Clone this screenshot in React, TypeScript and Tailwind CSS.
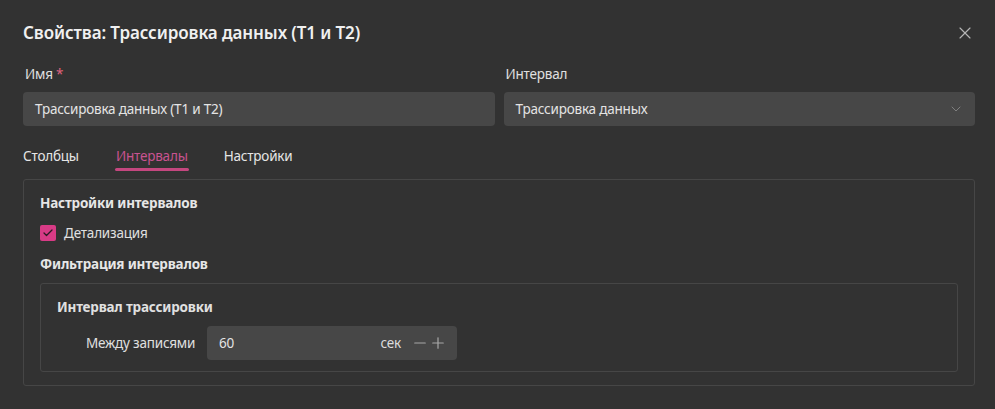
import React from 'react';
import { X, ChevronDown, Check, Minus, Plus } from 'lucide-react';

const font = { fontFamily: '"Segoe UI", "Noto Sans", "Open Sans", sans-serif' };

export default function App() {
  return (
    <div className="w-[995px] h-[409px] bg-[#323232] text-[#e8e8e8] pl-[23px] pr-[20px] pt-[20px] text-[13.5px] tracking-[-0.2px]" style={font}>
      {/* header */}
      <div className="flex items-center justify-between h-[26px]">
        <h2 className="text-[17px] font-semibold leading-[26px] tracking-[-0.1px] text-[#f0f0f0]">Свойства: Трассировка данных (T1 и T2)</h2>
        <button className="text-[#b4b4b4]">
          <X size={20} strokeWidth={1.4} />
        </button>
      </div>

      {/* name + interval */}
      <div className="grid grid-cols-2 gap-x-[9px] mt-[18px]">
        <div>
          <label className="block leading-[20px] pl-[2px] text-[#e0e0e0]">
            Имя <span className="text-[#e0627f]">*</span>
          </label>
          <div className="mt-[8px] h-[34px] rounded-[4px] bg-[#474747] flex items-center px-[12px] text-[#e4e4e4]">
            Трассировка данных (T1 и T2)
          </div>
        </div>
        <div>
          <label className="block leading-[20px] pl-[2px] text-[#e0e0e0]">Интервал</label>
          <div className="mt-[8px] h-[34px] rounded-[4px] bg-[#474747] flex items-center justify-between pl-[12px] pr-[11px] text-[#e4e4e4]">
            <span>Трассировка данных</span>
            <ChevronDown size={16} strokeWidth={1.25} className="text-[#8a8a8a]" />
          </div>
        </div>
      </div>

      {/* tabs */}
      <div className="flex gap-[36px] mt-[20px] leading-[20px]">
        <div className="text-[#e6e6e6]">Столбцы</div>
        <div className="flex flex-col items-center">
          <span className="text-[#c95390] px-[1px]">Интервалы</span>
          <span className="mt-[2px] h-[3px] w-full rounded-full bg-[#c4477f]" />
        </div>
        <div className="text-[#e6e6e6] -ml-[1px]">Настройки</div>
      </div>

      {/* content box */}
      <div className="mt-[8px] h-[207px] border border-[#464646] rounded-[3px] px-[16px] pt-[13px] pb-[12px]">
        <div className="font-bold leading-[20px] text-[#e6e6e6]">Настройки интервалов</div>
        <label className="mt-[10px] flex items-center gap-[8px] leading-[20px] text-[#e0e0e0]">
          <span className="w-[16px] h-[16px] rounded-[2px] bg-[#d83b86] flex items-center justify-center">
            <Check size={12} strokeWidth={2.5} className="text-[#2a1a22]" />
          </span>
          Детализация
        </label>
        <div className="mt-[11px] font-bold leading-[20px] text-[#e6e6e6]">Фильтрация интервалов</div>

        <div className="mt-[9px] border border-[#464646] rounded-[3px] pl-[16px] pt-[13px] pb-[11px]">
          <div className="font-bold leading-[20px] text-[#e0e0e0]">Интервал трассировки</div>
          <div className="mt-[9px] flex items-center pl-[29px]">
            <span className="text-[#e0e0e0] w-[121px]">Между записями</span>
            <div className="w-[250px] h-[34px] rounded-[4px] bg-[#474747] flex items-center pl-[12px] pr-[10px] text-[#e4e4e4]">
              <span className="flex-1">60</span>
              <span className="mr-[10px] text-[#dcdcdc]">сек</span>
              <Minus size={18} strokeWidth={1.6} className="text-[#a8a8a8]" />
              <Plus size={18} strokeWidth={1.6} className="text-[#a8a8a8]" />
            </div>
          </div>
        </div>
      </div>
    </div>
  );
}
